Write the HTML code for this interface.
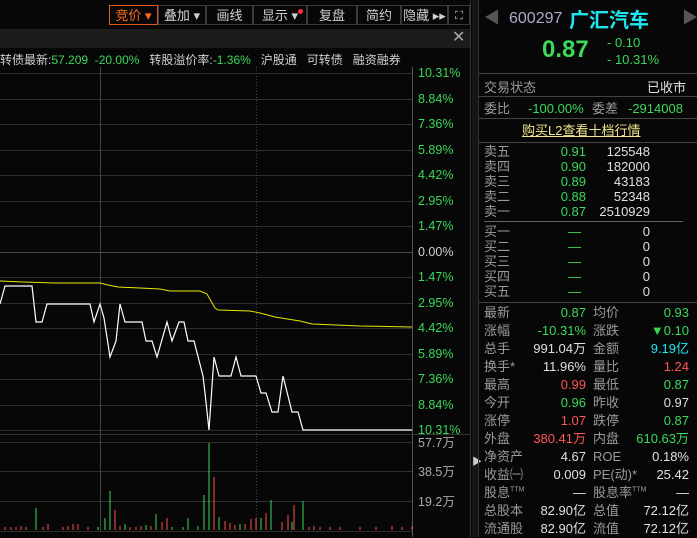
<!DOCTYPE html>
<html><head><meta charset="utf-8"><style>
body{margin:0;width:697px;height:537px;background:#070707;overflow:hidden;font-family:"Liberation Sans","Noto Sans CJK SC",sans-serif;position:relative;color:#c8c8c8}
.a{position:absolute;white-space:nowrap;line-height:16px}
.btn{position:absolute;top:5px;height:20px;border:1px solid #3a3a3a;font-size:13px;line-height:20px;text-align:center;color:#d0d0d0;box-sizing:border-box}
.g{color:#3bd85a}.r{color:#ff5555}.w{color:#e0e0e0}.c{color:#1ee6f0}.gy{color:#9a9a9a}
.lbl{position:absolute;font-size:12.5px;line-height:14px;color:#3bd85a}
</style></head><body>
<div class="btn" style="left:109px;width:49px;border-color:#e05a1a;color:#ff6a1a">竞价 ▾</div>
<div class="btn" style="left:158px;width:48px">叠加 ▾</div>
<div class="btn" style="left:206px;width:47px">画线</div>
<div class="btn" style="left:253px;width:54px">显示 ▾<span style="position:absolute;right:3px;top:3px;width:5px;height:5px;border-radius:50%;background:#ff3030"></span></div>
<div class="btn" style="left:307px;width:50px">复盘</div>
<div class="btn" style="left:357px;width:44px">简约</div>
<div class="btn" style="left:401px;width:47px">隐藏 ▸▸</div>
<div class="btn" style="left:448px;width:22px;font-size:11px">⛶</div>
<div class="a" style="left:0;top:29px;width:470px;height:19px;background:#1c1c1c"></div>
<div class="a" style="left:452px;top:30px;font-size:16px;color:#aaa">✕</div>
<div class="a" style="left:0;top:52px;font-size:12px;color:#d0d0d0">转债最新:<span class="g">57.209</span>&nbsp; <span class="g">-20.00%</span>&nbsp;&nbsp; 转股溢价率:<span class="g">-1.36%</span>&nbsp;&nbsp; 沪股通&nbsp;&nbsp; 可转债&nbsp;&nbsp; 融资融券</div>
<svg class="a" style="left:0;top:0" width="475" height="537">
<g stroke="#2e2e2e" stroke-width="1">
<line x1="0" y1="73.5" x2="412" y2="73.5"/><line x1="0" y1="99.5" x2="412" y2="99.5"/><line x1="0" y1="124.5" x2="412" y2="124.5"/><line x1="0" y1="150.5" x2="412" y2="150.5"/><line x1="0" y1="175.5" x2="412" y2="175.5"/><line x1="0" y1="201.5" x2="412" y2="201.5"/><line x1="0" y1="226.5" x2="412" y2="226.5"/><line x1="0" y1="252.5" x2="412" y2="252.5" stroke="#4a4a4a"/><line x1="0" y1="277.5" x2="412" y2="277.5"/><line x1="0" y1="303.5" x2="412" y2="303.5"/><line x1="0" y1="328.5" x2="412" y2="328.5"/><line x1="0" y1="354.5" x2="412" y2="354.5"/><line x1="0" y1="379.5" x2="412" y2="379.5"/><line x1="0" y1="405.5" x2="412" y2="405.5"/><line x1="0" y1="430.5" x2="412" y2="430.5"/>
<line x1="0" y1="442.5" x2="412" y2="442.5"/><line x1="0" y1="471.5" x2="412" y2="471.5"/><line x1="0" y1="501.5" x2="412" y2="501.5"/><line x1="0" y1="531.5" x2="412" y2="531.5"/>
<line x1="100.5" y1="67" x2="100.5" y2="531" stroke="#444"/>
<line x1="412.5" y1="67" x2="412.5" y2="537" stroke="#555"/>
<line x1="0" y1="434.5" x2="470" y2="434.5" stroke="#333"/>
<line x1="470.5" y1="0" x2="470.5" y2="537" stroke="#333"/>
</g>
<line x1="256.5" y1="67" x2="256.5" y2="531" stroke="#444" stroke-dasharray="1,2"/>
<polyline fill="none" stroke="#e8e800" stroke-width="1" points="0,281 23,282 55,283 100,283 108,285 118,287 160,289 170,291 200,291 207,294 215,308 218,310 250,311 260,313 275,317 300,321 312,324 360,326 412,327"/>
<polyline fill="none" stroke="#fff" stroke-width="1.2" points="0,304 5,286 32,286 36,322 42,322 47,304 90,304 94,322 100,304 104,318 110,357 116,341 120,304 125,322 142,322 146,341 152,341 157,357 167,322 172,341 179,322 184,322 188,341 194,341 203,376 205,393 209,430 214,357 219,376 231,376 236,357 241,376 256,376 261,393 266,393 272,412 278,412 283,376 292,412 298,412 303,430 412,430"/>
<g stroke="#ff4d4d" stroke-width="1">
<line x1="5" y1="530" x2="5" y2="527"/><line x1="11" y1="530" x2="11" y2="527"/><line x1="16" y1="530" x2="16" y2="527"/><line x1="21" y1="530" x2="21" y2="526"/><line x1="26" y1="530" x2="26" y2="527"/><line x1="43" y1="530" x2="43" y2="527"/><line x1="48" y1="530" x2="48" y2="524"/><line x1="63" y1="530" x2="63" y2="527"/><line x1="68" y1="530" x2="68" y2="526"/><line x1="73" y1="530" x2="73" y2="524"/><line x1="78" y1="530" x2="78" y2="524"/><line x1="88" y1="530" x2="88" y2="527"/><line x1="115" y1="530" x2="115" y2="510"/><line x1="120" y1="530" x2="120" y2="526"/><line x1="130" y1="530" x2="130" y2="527"/><line x1="136" y1="530" x2="136" y2="527"/><line x1="141" y1="530" x2="141" y2="526"/><line x1="151" y1="530" x2="151" y2="526"/><line x1="162" y1="530" x2="162" y2="522"/><line x1="167" y1="530" x2="167" y2="518"/><line x1="214" y1="530" x2="214" y2="477"/><line x1="225" y1="530" x2="225" y2="521"/><line x1="230" y1="530" x2="230" y2="523"/><line x1="235" y1="530" x2="235" y2="525"/><line x1="245" y1="530" x2="245" y2="524"/><line x1="251" y1="530" x2="251" y2="519"/><line x1="256" y1="530" x2="256" y2="518"/><line x1="266" y1="530" x2="266" y2="513"/><line x1="282" y1="530" x2="282" y2="522"/><line x1="288" y1="530" x2="288" y2="515"/><line x1="294" y1="530" x2="294" y2="505"/><line x1="309" y1="530" x2="309" y2="527"/><line x1="314" y1="530" x2="314" y2="526"/><line x1="320" y1="530" x2="320" y2="527"/><line x1="330" y1="530" x2="330" y2="527"/><line x1="340" y1="530" x2="340" y2="527"/><line x1="360" y1="530" x2="360" y2="527"/><line x1="376" y1="530" x2="376" y2="527"/><line x1="392" y1="530" x2="392" y2="526"/><line x1="402" y1="530" x2="402" y2="527"/><line x1="412" y1="530" x2="412" y2="526"/>
</g>
<g stroke="#3bd85a" stroke-width="1">
<line x1="36" y1="530" x2="36" y2="508"/><line x1="98" y1="530" x2="98" y2="527"/><line x1="105" y1="530" x2="105" y2="518"/><line x1="110" y1="530" x2="110" y2="491"/><line x1="125" y1="530" x2="125" y2="524"/><line x1="146" y1="530" x2="146" y2="525"/><line x1="156" y1="530" x2="156" y2="514"/><line x1="172" y1="530" x2="172" y2="527"/><line x1="183" y1="530" x2="183" y2="527"/><line x1="188" y1="530" x2="188" y2="518"/><line x1="198" y1="530" x2="198" y2="526"/><line x1="204" y1="530" x2="204" y2="495"/><line x1="209" y1="530" x2="209" y2="443"/><line x1="219" y1="530" x2="219" y2="517"/><line x1="240" y1="530" x2="240" y2="524"/><line x1="261" y1="530" x2="261" y2="518"/><line x1="271" y1="530" x2="271" y2="500"/><line x1="292" y1="530" x2="292" y2="522"/><line x1="303" y1="530" x2="303" y2="501"/>
</g>
</svg>
<div class="lbl r" style="left:418px;top:66px">10.31%</div>
<div class="lbl r" style="left:418px;top:92px">8.84%</div>
<div class="lbl r" style="left:418px;top:117px">7.36%</div>
<div class="lbl r" style="left:418px;top:143px">5.89%</div>
<div class="lbl r" style="left:418px;top:168px">4.42%</div>
<div class="lbl r" style="left:418px;top:194px">2.95%</div>
<div class="lbl r" style="left:418px;top:219px">1.47%</div>
<div class="lbl" style="left:418px;top:245px;color:#d0d0d0">0.00%</div>
<div class="lbl" style="left:418px;top:270px">1.47%</div>
<div class="lbl" style="left:418px;top:296px">2.95%</div>
<div class="lbl" style="left:418px;top:321px">4.42%</div>
<div class="lbl" style="left:418px;top:347px">5.89%</div>
<div class="lbl" style="left:418px;top:372px">7.36%</div>
<div class="lbl" style="left:418px;top:398px">8.84%</div>
<div class="lbl" style="left:418px;top:423px">10.31%</div>
<div class="lbl" style="left:418px;top:436px;color:#aaa">57.7万</div>
<div class="lbl" style="left:418px;top:465px;color:#aaa">38.5万</div>
<div class="lbl" style="left:418px;top:495px;color:#aaa">19.2万</div>
<div class="a" style="left:472px;top:0;width:6px;height:537px;background:#151515"></div>
<div class="a" style="left:472px;top:455px;font-size:10px;color:#ccc">▶</div>
<div class="a" style="left:478px;top:0;width:219px;height:537px;border-left:1px solid #333"></div>
<div class="a" style="left:484px;top:11px;font-size:16px;color:#555">◀</div>
<div class="a" style="left:682px;top:11px;font-size:16px;color:#555">▶</div>
<div class="a" style="left:509px;top:11px;font-size:16px;color:#aac">600297</div>
<div class="a c" style="left:569px;top:10px;font-size:20px;line-height:22px;font-weight:bold">广汇汽车</div>
<div class="a g" style="left:542px;top:37px;font-size:24px;line-height:26px;font-weight:bold">0.87</div>
<div class="a g" style="left:607px;top:35px;font-size:13px">- 0.10</div>
<div class="a g" style="left:607px;top:52px;font-size:13px">- 10.31%</div>
<div class="a" style="left:479px;top:73px;width:218px;height:1px;background:#444"></div>
<div class="a gy" style="left:484px;top:80px;font-size:13px">交易状态</div>
<div class="a w" style="left:647px;top:80px;font-size:13px">已收市</div>
<div class="a" style="left:479px;top:96px;width:218px;height:1px;background:#444"></div>
<div class="a gy" style="left:484px;top:101px;font-size:13px">委比</div>
<div class="a g" style="left:528px;top:101px;font-size:13px">-100.00%</div>
<div class="a gy" style="left:592px;top:101px;font-size:13px">委差</div>
<div class="a g" style="left:628px;top:101px;font-size:13px">-2914008</div>
<div class="a" style="left:479px;top:118px;width:218px;height:1px;background:#444"></div>
<div class="a" style="left:522px;top:123px;font-size:13px;color:#f0e68c;text-decoration:underline">购买L2查看十档行情</div>
<div class="a" style="left:479px;top:142px;width:218px;height:1px;background:#444"></div>
<div class="a gy" style="left:484px;top:144px;font-size:13px;line-height:15px">卖五<br>卖四<br>卖三<br>卖二<br>卖一</div>
<div class="a g" style="left:558px;top:144px;font-size:13px;line-height:15px;text-align:right;width:28px">0.91<br>0.90<br>0.89<br>0.88<br>0.87</div>
<div class="a w" style="left:592px;top:144px;font-size:13px;line-height:15px;text-align:right;width:58px">125548<br>182000<br>43183<br>52348<br>2510929</div>
<div class="a" style="left:484px;top:221px;width:199px;height:1px;background:#666"></div>
<div class="a gy" style="left:484px;top:224px;font-size:13px;line-height:15px">买一<br>买二<br>买三<br>买四<br>买五</div>
<div class="a g" style="left:568px;top:224px;font-size:13px;line-height:15px">—<br>—<br>—<br>—<br>—</div>
<div class="a w" style="left:640px;top:224px;font-size:13px;line-height:15px;text-align:right;width:10px">0<br>0<br>0<br>0<br>0</div>
<div class="a" style="left:479px;top:302px;width:218px;height:1px;background:#444"></div>
<div class="a gy" style="left:484px;top:304px;font-size:13px;line-height:18px">最新<br>涨幅<br>总手<br>换手*<br>最高<br>今开<br>涨停<br>外盘<br>净资产<br>收益㈠<br>股息<sup style="font-size:7px;line-height:0">TTM</sup><br>总股本<br>流通股</div>
<div class="a" style="left:528px;top:304px;width:58px;text-align:right;font-size:13px;line-height:18px"><span class="g">0.87</span><br><span class="g">-10.31%</span><br><span class="w">991.04万</span><br><span class="w">11.96%</span><br><span class="r">0.99</span><br><span class="g">0.96</span><br><span class="r">1.07</span><br><span class="r">380.41万</span><br><span class="w">4.67</span><br><span class="w">0.009</span><br><span class="w">—</span><br><span class="w">82.90亿</span><br><span class="w">82.90亿</span></div>
<div class="a gy" style="left:593px;top:304px;font-size:13px;line-height:18px">均价<br>涨跌<br>金额<br>量比<br>最低<br>昨收<br>跌停<br>内盘<br>ROE<br>PE(动)*<br>股息率<sup style="font-size:7px;line-height:0">TTM</sup><br>总值<br>流值</div>
<div class="a" style="left:620px;top:304px;width:69px;text-align:right;font-size:13px;line-height:18px"><span class="g">0.93</span><br><span class="g">▼0.10</span><br><span class="c">9.19亿</span><br><span class="r">1.24</span><br><span class="g">0.87</span><br><span class="w">0.97</span><br><span class="g">0.87</span><br><span class="g">610.63万</span><br><span class="w">0.18%</span><br><span class="w">25.42</span><br><span class="w">—</span><br><span class="w">72.12亿</span><br><span class="w">72.12亿</span></div>
</body></html>
